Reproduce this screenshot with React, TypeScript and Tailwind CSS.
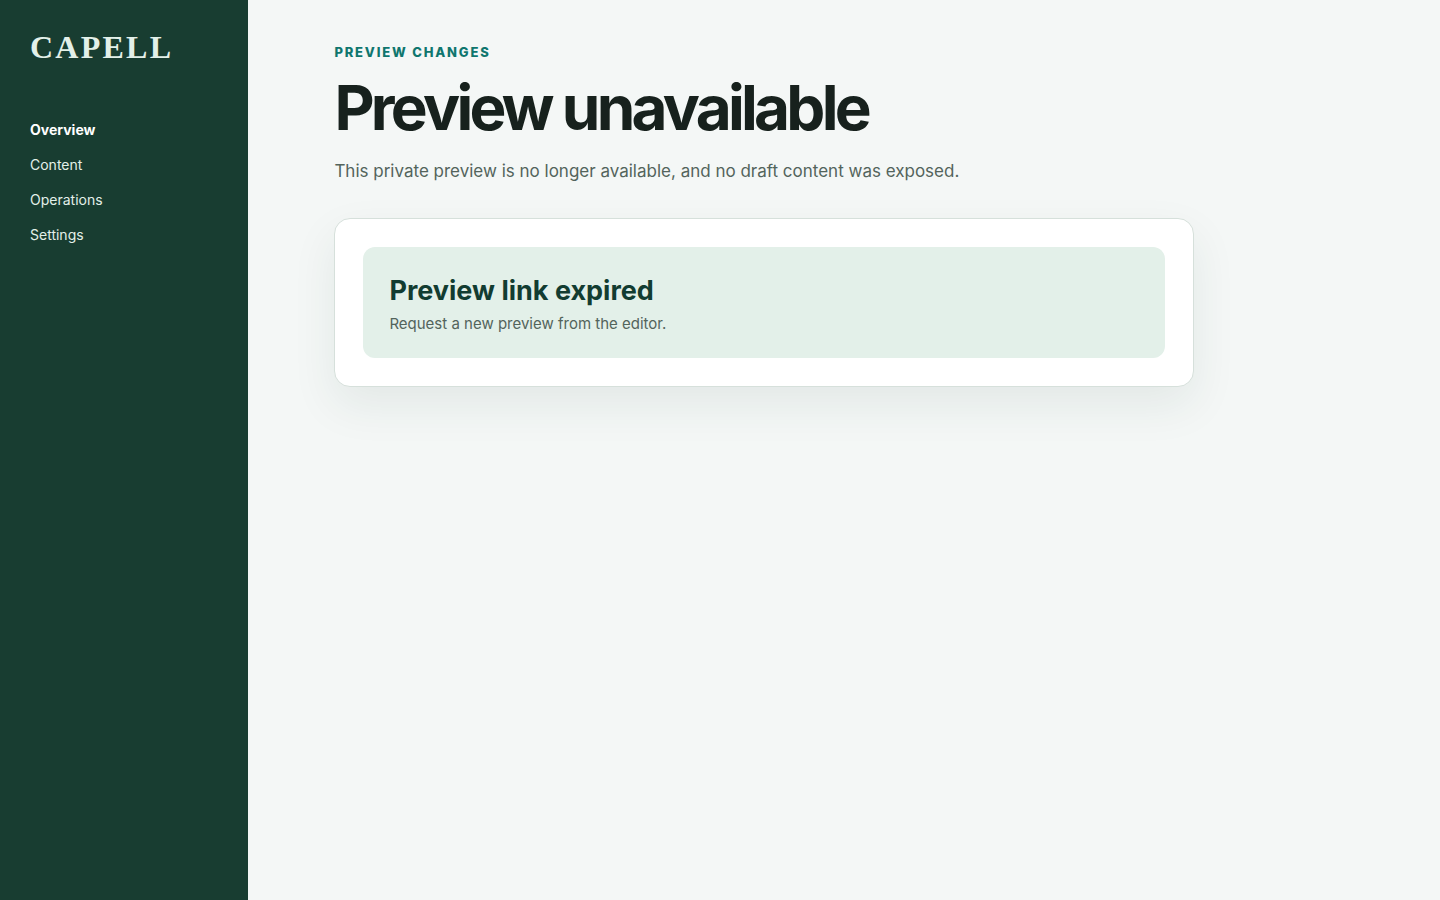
import React from "react";

interface INavItem {
  label: string;
  active?: boolean;
}

const navItems: INavItem[] = [
  { label: "Overview", active: true },
  { label: "Content" },
  { label: "Operations" },
  { label: "Settings" },
];

function Sidebar() {
  return (
    <aside className="w-[248px] shrink-0 bg-[#183d31] px-[30px] py-[31px] text-[#e3f0e9]">
      <div className="font-[Georgia,'Liberation_Serif',serif] text-[32px] leading-8 font-bold tracking-[0.07em]">
        CAPELL
      </div>
      <nav className="mt-[58px] flex flex-col gap-[17px] text-sm leading-[18px]">
        {navItems.map((item) => (
          <a
            key={item.label}
            href="#"
            className={item.active ? "font-bold text-white" : ""}
          >
            {item.label}
          </a>
        ))}
      </nav>
    </aside>
  );
}

export default function App() {
  return (
    <div className="flex min-h-screen bg-[#f4f7f6] font-[Inter,sans-serif] text-[#17211d]">
      <Sidebar />
      <main className="min-w-0 flex-1 px-[6vw] py-11">
        <div className="max-w-[860px]">
          <p className="text-[13px] leading-4 font-extrabold tracking-[0.14em] text-[#0f766e] uppercase">
            Preview changes
          </p>
          <h1 className="mt-4 text-[62px] leading-[64px] font-bold tracking-[-0.06em]">
            Preview unavailable
          </h1>
          <p className="mt-[17px] text-[17px] leading-7 text-[#53645c]">
            This private preview is no longer available, and no draft content
            was exposed.
          </p>
          <section className="mt-[33px] rounded-2xl border border-[#d6e0db] bg-white p-7 shadow-[0_18px_45px_rgba(24,61,49,0.08)]">
            <div className="rounded-xl bg-[#e3f0e9] px-[26px] py-6">
              <h2 className="mt-[2px] text-[27px] leading-9 font-bold text-[#123c31]">
                Preview link expired
              </h2>
              <p className="mt-[5px] text-[15px] leading-5 text-[#53645c]">
                Request a new preview from the editor.
              </p>
            </div>
          </section>
        </div>
      </main>
    </div>
  );
}
